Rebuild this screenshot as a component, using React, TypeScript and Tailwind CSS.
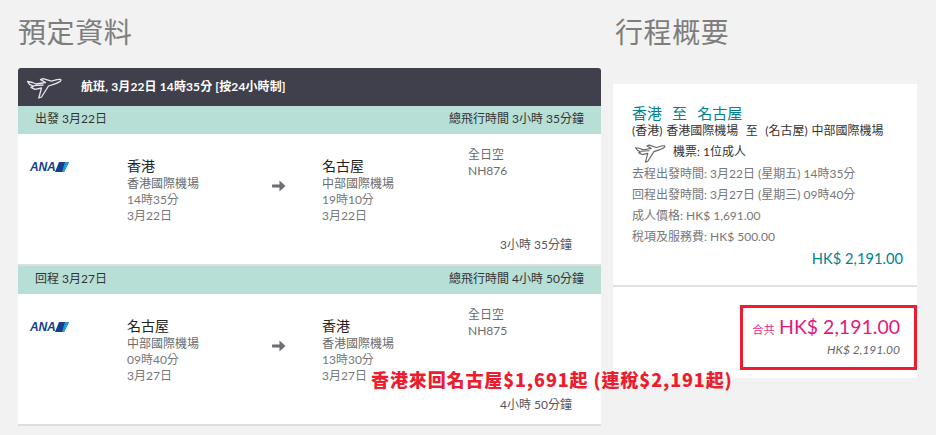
const font = "font-['Lato','Noto_Sans_CJK_TC',sans-serif]";

function Plane({ className, color }: { className?: string; color: string }) {
  return (
    <svg viewBox="0 0 36 24" className={className} fill="none" stroke={color} strokeWidth="1.3" strokeLinejoin="round" strokeLinecap="round">
      <path d="M1.5 6.5 L6.5 7.5 L10 9 L19.5 7.5 L14.5 4.6 L17 3.6 L25.5 6.2 L31 4.6 C33.5 4 35.5 4.3 34.8 5.6 C34 6.9 31 8.2 27.5 9.3 L22.5 11 L15.5 22 L12.8 23 L15.5 13 L9 14.4 L5 12.4 L7.4 11.4 L3.5 9.4 Z" />
      <path d="M8 10.6 L17 10" />
    </svg>
  );
}

function AnaLogo() {
  return (
    <div className="flex items-center h-[12px] mt-[3px]">
      <span className="font-['Liberation_Sans',sans-serif] italic font-bold text-[12px] leading-[12px] text-[#16408c] tracking-[-0.2px]">ANA</span>
      <svg viewBox="0 0 14 10" className="w-[14px] h-[10px]">
        <path d="M4 0 H14 L9 10 H0 Z" fill="#16408c" />
        <path d="M10 0 H14 L9 10 H7 Z" fill="#1e9fd8" />
      </svg>
    </div>
  );
}

function Place({ city, airport, time, date }: { city: string; airport: string; time: string; date: string }) {
  return (
    <div className="w-[145px] flex flex-col">
      <div className="text-[14px] leading-[16px] text-[#222]">{city}</div>
      <div className="text-[12px] leading-[16px] mt-[2px] text-[#6b6b6b]">{airport}</div>
      <div className="text-[12px] leading-[16px] text-[#777]">{time}</div>
      <div className="text-[12px] leading-[16px] text-[#777]">{date}</div>
    </div>
  );
}

function Arrow() {
  return (
    <svg viewBox="0 0 15 13" className="w-[14px] h-[12px]" fill="#6d6c76">
      <path d="M0 5 H8 V0.5 L14.5 6.5 L8 12.5 V8 H0 Z" />
    </svg>
  );
}

function Leg(p: {
  label: string; total: string; from: [string, string, string, string]; to: [string, string, string, string]; flight: string; duration: string;
}) {
  return (
    <div>
      <div className="h-[28px] bg-[#b8dfd6] flex items-center justify-between pl-[17px] pr-[17px] pb-[2px] text-[12px] text-[#333]">
        <span>{p.label}</span>
        <span>{p.total}</span>
      </div>
      <div className="h-[132px] bg-white border-b-2 border-[#dedede] relative pl-[12px] pt-[24px] flex items-start">
        <div className="w-[97px]"><AnaLogo /></div>
        <Place city={p.from[0]} airport={p.from[1]} time={p.from[2]} date={p.from[3]} />
        <div className="w-[50px] pt-[22px]"><Arrow /></div>
        <Place city={p.to[0]} airport={p.to[1]} time={p.to[2]} date={p.to[3]} />
        <div className="-mt-[11px] text-[12px] leading-[16px] text-[#6b6b6b] ml-[1px]">
          <div>全日空</div>
          <div>{p.flight}</div>
        </div>
        <div className="absolute right-[29px] bottom-[11px] text-[12px] leading-[16px] text-[#555]">{p.duration}</div>
      </div>
    </div>
  );
}

export default function App() {
  return (
    <div className={`${font} relative w-[936px] h-[435px] overflow-hidden bg-[#f2f2f2] flex items-start`}>
      <div className="w-[583px] ml-[18px]">
        <h1 className="text-[28px] leading-[36px] mt-[14px] mb-[18px] text-[#7d7d7d] font-normal tracking-[0.6px]">預定資料</h1>
        <div className="h-[38px] bg-[#403f4c] rounded-t-[3px] flex items-center pl-[8px] text-[12px] font-bold text-white">
          <Plane className="w-[36px] h-[24px]" color="#e8e8e8" />
          <span className="ml-[19px] tracking-[0.12px]">航班, 3月22日 14時35分 [按24小時制]</span>
        </div>
        <Leg
          label="出發 3月22日"
          total="總飛行時間 3小時 35分鐘"
          from={["香港", "香港國際機場", "14時35分", "3月22日"]}
          to={["名古屋", "中部國際機場", "19時10分", "3月22日"]}
          flight="NH876"
          duration="3小時 35分鐘"
        />
        <Leg
          label="回程 3月27日"
          total="總飛行時間 4小時 50分鐘"
          from={["名古屋", "中部國際機場", "09時40分", "3月27日"]}
          to={["香港", "香港國際機場", "13時30分", "3月27日"]}
          flight="NH875"
          duration="4小時 50分鐘"
        />
      </div>

      <div className="w-[304px] ml-[12px]">
        <h2 className="text-[28px] leading-[36px] mt-[14px] mb-[34px] ml-[2px] text-[#7d7d7d] font-normal tracking-[0.6px]">行程概要</h2>
        <div className="h-[294px] bg-white flex flex-col">
          <div className="h-[203px] border-b-2 border-[#e2e2e2] pt-[19px] pl-[19px] pr-[14px]">
            <div className="text-[15px] leading-[20px] text-[#00838f] whitespace-pre [word-spacing:1.2px]">香港  至  名古屋</div>
            <div className="text-[12px] leading-[16px] text-[#333] whitespace-pre [word-spacing:0.7px]">(香港) 香港國際機場  至  (名古屋) 中部國際機場</div>
            <div className="flex items-center h-[24px] mt-[1px] text-[12px] text-[#333]">
              <Plane className="w-[32px] h-[21px] ml-[2px]" color="#666" />
              <span className="ml-[7px]">機票: 1位成人</span>
            </div>
            <div className="-mt-[1px] text-[12px] leading-[21px] text-[#777]">
              <div>去程出發時間: 3月22日 (星期五) 14時35分</div>
              <div>回程出發時間: 3月27日 (星期三) 09時40分</div>
              <div>成人價格: HK$ 1,691.00</div>
              <div>稅項及服務費: HK$ 500.00</div>
            </div>
            <div className="text-right text-[14.7px] leading-[20px] mt-[1px] text-[#00838f]">HK$ 2,191.00</div>
          </div>
          <div className="flex justify-end mt-[18px]">
            <div className="w-[177px] h-[65px] border-[3px] border-[#ed1c2e] pr-[14px] flex flex-col items-end">
              <div className="flex items-baseline mt-[6px] h-[26px]">
                <span className="text-[11px] text-[#e91e7d] mr-[4px] tracking-[0.3px]">合共</span>
                <span className="text-[19.5px] leading-[26px] text-[#e5177b]">HK$ 2,191.00</span>
              </div>
              <div className="text-[12px] leading-[16px] mt-[2px] italic text-[#666]">HK$ 2,191.00</div>
            </div>
          </div>
        </div>
      </div>

      <div className="absolute left-[371px] top-[367px] text-[18px] leading-[24px] font-black tracking-[0.88px] text-[#ed1c2e] whitespace-nowrap font-['Noto_Sans_CJK_TC',sans-serif]">
        香港來回名古屋$1,691起 (連稅$2,191起)
      </div>
    </div>
  );
}
